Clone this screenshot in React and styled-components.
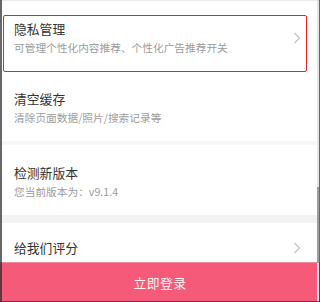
import React from "react";
import styled, { createGlobalStyle } from "styled-components";

const Global = createGlobalStyle`
  html, body { margin: 0; padding: 0; background: #ffffff; }
  body {
    font-family: "Noto Sans CJK SC", "Noto Sans", "Liberation Sans", sans-serif;
    -webkit-font-smoothing: antialiased;
  }
`;

const Screen = styled.div`
  position: relative;
  width: 320px;
  height: 302px;
  overflow: hidden;
  background: #ffffff;
  box-sizing: border-box;
`;

const List = styled.div`
  display: flex;
  flex-direction: column;
  padding-top: 1px;
`;

const Row = styled.div`
  position: relative;
  display: flex;
  align-items: center;
  justify-content: space-between;
  padding: ${(p) => (p.$single ? "0 19px 0 14px" : "19px 19px 15px 14px")};
  height: ${(p) => (p.$single ? "50px" : "auto")};
  background: #ffffff;
`;

const Texts = styled.div`
  display: flex;
  flex-direction: column;
  gap: 2px;
`;

const Title = styled.div`
  font-size: 12.8px;
  line-height: 18px;
  color: #333333;
`;

const Sub = styled.div`
  font-size: 10.7px;
  line-height: 16px;
  color: #9c9c9c;
`;

const Gap = styled.div`
  height: ${(p) => p.$h}px;
  background: ${(p) => p.$c};
`;

const Highlight = styled.div`
  position: absolute;
  z-index: 2;
  left: 3px;
  right: 13px;
  top: 14px;
  bottom: -1px;
  border: 1.5px solid #e3222e;
  border-radius: 2px;
  pointer-events: none;
`;

const LoginBar = styled.button`
  position: absolute;
  z-index: 3;
  left: 0;
  right: 0;
  bottom: 0;
  height: 40px;
  border: none;
  border-top: 1px solid #f68aa0;
  background: #f55b79;
  color: #fff4f6;
  font-family: inherit;
  font-size: 12.8px;
  letter-spacing: 0.5px;
  padding: 0;
  display: flex;
  align-items: center;
  justify-content: center;
`;

const Scrollbar = styled.div`
  position: absolute;
  z-index: 4;
  top: 0;
  bottom: 0;
  right: 1px;
  width: 2px;
  background: #e4e4e4;
`;

const Thumb = styled.div`
  position: absolute;
  left: 0;
  right: 0;
  top: 187px;
  height: 76px;
  background: #9e9e9e;
`;

const Frame = styled.div`
  position: absolute;
  z-index: 5;
  inset: 0;
  pointer-events: none;
  box-shadow: inset 2px 0 0 rgba(40, 40, 40, 0.7), inset -1px 0 0 rgba(40, 40, 40, 0.7),
    inset 0 -1px 0 rgba(40, 40, 40, 0.7), inset 0 1px 0 rgba(0, 0, 0, 0.08);
`;

const Chevron = () => (
  <svg width="8" height="12" viewBox="0 0 8 12">
    <path d="M1.5 1 L6.5 6 L1.5 11" fill="none" stroke="#c3c3c3" strokeWidth="1.3" />
  </svg>
);

export default function App() {
  return (
    <>
      <Global />
      <Screen>
        <List>
          <Row>
            <Texts>
              <Title>隐私管理</Title>
              <Sub>可管理个性化内容推荐、个性化广告推荐开关</Sub>
            </Texts>
            <Chevron />
            <Highlight />
          </Row>
          <Row>
            <Texts>
              <Title>清空缓存</Title>
              <Sub>清除页面数据/照片/搜索记录等</Sub>
            </Texts>
          </Row>
          <Gap $h={4} $c="#f7f7f7" />
          <Row>
            <Texts>
              <Title>检测新版本</Title>
              <Sub>您当前版本为：v9.1.4</Sub>
            </Texts>
          </Row>
          <Gap $h={8} $c="#f2f2f2" />
          <Row $single>
            <Title>给我们评分</Title>
            <Chevron />
          </Row>
        </List>
        <LoginBar>立即登录</LoginBar>
        <Scrollbar>
          <Thumb />
        </Scrollbar>
        <Frame />
      </Screen>
    </>
  );
}
